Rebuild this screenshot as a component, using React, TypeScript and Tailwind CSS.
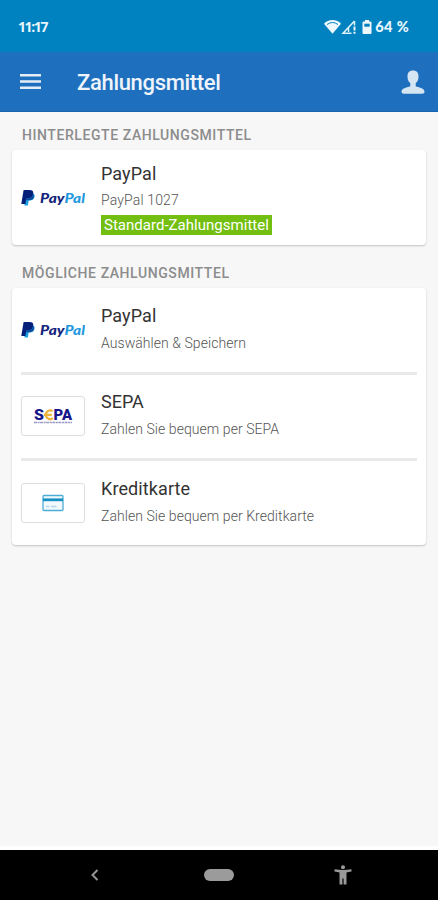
import React from "react";

function PayPalLogo() {
  return (
    <svg width="64" height="18" viewBox="0 0 64 18" aria-label="PayPal">
      <path d="M5 4.200h6.400c2.200.5 2.600 2.200 2 4.100-.7 2.300-2.400 3.200-4.600 3.200H7.700L6.800 16.500H3.400z" fill="#1a9ce0" />
      <path d="M2.600 1h6c2.900 0 4.200 1.500 3.600 4-.6 2.900-2.500 4.300-5 4.300H5.300L4.400 15H.3z" fill="#06207a" />
      <path d="M5.300 9.300h1.900c2.500 0 4.400-1.200 5-4 .7.8.9 1.800.6 3-.7 2.200-2.300 3-4.500 3H4.900z" fill="#0c4a9e" />
      <text x="19" y="14.300" textLength="45" lengthAdjust="spacingAndGlyphs" fontFamily="Lato, sans-serif" fontSize="12.500" fontStyle="italic" fontWeight="900">
        <tspan fill="#12247c">Pay</tspan>
        <tspan fill="#2499e0">Pal</tspan>
      </text>
    </svg>
  );
}

function SepaLogo() {
  return (
    <svg width="40" height="18" viewBox="0 0 40 18" aria-label="SEPA">
      <g fontFamily="Roboto, sans-serif" fontWeight="900" fontSize="14.500" fill="#16168a">
        <text x="1" y="13" textLength="10" lengthAdjust="spacingAndGlyphs">S</text>
        <text x="20.500" y="13" textLength="18.500" lengthAdjust="spacingAndGlyphs">PA</text>
      </g>
      <path d="M19.600 4.200a4.300 4.300 0 1 0 .3 6.900M10.800 7.900h8" fill="none" stroke="#edb43d" strokeWidth="2.200" />
      <path d="M1 15.500h38" stroke="#9a9ac8" strokeWidth="1.400" strokeDasharray="3 .6 2 .5" />
    </svg>
  );
}

function CardIcon() {
  return (
    <svg width="22" height="18" viewBox="0 0 22 18">
      <rect x="1" y="1.500" width="20" height="15" rx="1" fill="#f3fafd" stroke="#4dadd6" strokeWidth="1.300" />
      <path d="M1 5.800h20" stroke="#168fc2" strokeWidth="2.800" />
      <path d="M4 12.500h3.500M9 12.500h5.500" stroke="#b4d5ec" strokeWidth="1.600" />
    </svg>
  );
}

function Frame({ children }: { children: React.ReactNode }) {
  return (
    <div className="flex h-10 w-16 items-center justify-center rounded-[3px] border border-[#dedede] bg-white">
      {children}
    </div>
  );
}

interface MethodProps {
  logo: React.ReactNode;
  title: string;
  titleClass: string;
  text: string;
}

function Method({ logo, title, titleClass, text }: MethodProps) {
  return (
    <div className="flex h-[83.5px] items-center">
      <div className="w-20 shrink-0">{logo}</div>
      <div className="flex flex-col gap-[5px] pb-px whitespace-nowrap">
        <div className={"text-[18px] leading-[23px] text-[#333] " + titleClass}>{title}</div>
        <div className="text-[14px] leading-[23px] font-light tracking-[0.06px] text-[#555]">{text}</div>
      </div>
    </div>
  );
}

export default function App() {
  return (
    <div className="flex h-[900px] w-[438px] flex-col overflow-hidden bg-[#f7f7f7] font-['Roboto',sans-serif]">
      <div className="flex h-[52px] shrink-0 items-center bg-[#0082c0] pt-[1px] pr-[29px] pl-[18px] text-[#e8f6fc]">
        <span className="font-['Open_Sans',sans-serif] text-[14px] font-bold tracking-[-1.4px]">11:17</span>
        <span className="grow" />
        <svg width="54" height="18" viewBox="0 0 54 18" fill="#edf8fd">
          <path d="M0 5.800C4 .8 13 .8 17 5.800L8.500 15.800z" />
          <path d="M3 6.500q5.500-4 11 0" fill="none" stroke="#0082c0" strokeWidth="1" />
          <path d="M30.500 3L19 15.200h8.500M30.500 3v4.500M24.500 14V9.500" fill="none" stroke="#e0f2fa" strokeWidth="1.500" />
          <path d="M29.500 8.500h2v4h-2zM29.500 13.800h2v2h-2z" />
          <path d="M41 2h4v1.500h1.500q1 0 1 1v10.500q0 1-1 1h-7q-1 0-1-1V4.500q0-1 1-1H41z" />
          <path d="M40.300 5.700h5.400v3h-5.400z" fill="#0082c0" />
        </svg>
        <span className="ml-[-3px] font-['Lato',sans-serif] text-[14.5px] font-black tracking-[0.35px]">64 %</span>
      </div>

      <header className="flex h-[59.5px] shrink-0 items-center border-b border-[#1763ad] bg-[#1e70bf] pr-[13px] pl-5">
        <svg width="21" height="18" viewBox="0 0 21 18" stroke="#e4edf6" strokeWidth="2.500">
          <path d="M0 3.200h21M0 9.500h21M0 15.700h21" />
        </svg>
        <h1 className="ml-9 pt-[4px] text-[22px] leading-7 font-medium tracking-[-0.32px] text-[#eef4fa]">Zahlungsmittel</h1>
        <svg className="mt-[2px] ml-auto" width="24" height="26" viewBox="0 0 24 26" fill="#d5e5f2">
          <path d="M6.500 7.500C6.500 3.500 8.500 1.500 12 1.500s5.500 2 5.500 6c0 3-1 5.500-2.800 6.800v3c2.800 1.300 8.300 1.700 8.800 5.200.2 1.700-1 2.200-2.500 2.200H3C1.500 24.700.300 24.200.5 22.500c.5-3.500 6-3.900 8.800-5.200v-3C7.500 13 6.500 10.500 6.500 7.500z" />
        </svg>
      </header>

      <main className="grow px-3">
        <h2 className="flex h-[38.5px] items-end pb-[4px] pl-[10px] text-[14px] leading-[22px] font-medium tracking-[0.58px] text-[#8c8c8c]">
          HINTERLEGTE ZAHLUNGSMITTEL
        </h2>
        <section className="flex h-[94.5px] items-center rounded-[4px] bg-white pl-[9px] shadow-[0_1px_2px_rgba(0,0,0,0.22)]">
          <div className="w-20 shrink-0 pt-[2px]"><PayPalLogo /></div>
          <div className="flex flex-col items-start pt-[1px]">
            <div className="text-[18px] leading-[26px] tracking-[0.1px] text-[#333]">PayPal</div>
            <div className="mt-[2px] text-[14px] leading-[22px] font-light tracking-[0.15px] text-[#555]">PayPal 1027</div>
            <div className="mt-[4px] h-5 bg-[#72bf12] px-[3px] text-[15px] leading-5 tracking-[0.02px] whitespace-nowrap text-white">Standard-Zahlungsmittel</div>
          </div>
        </section>

        <h2 className="flex h-[43.5px] items-end pb-[4px] pl-[10px] text-[14px] leading-[22px] font-medium tracking-[0.58px] text-[#8c8c8c]">
          MÖGLICHE ZAHLUNGSMITTEL
        </h2>
        <section className="flex h-[257px] flex-col rounded-[4px] bg-white px-[9px] shadow-[0_1px_2px_rgba(0,0,0,0.22)]">
          <Method logo={<PayPalLogo />} title="PayPal" titleClass="tracking-[0.1px]" text="Auswählen & Speichern" />
          <div className="h-[3px] shrink-0 bg-[#e9e9e9]" />
          <Method logo={<Frame><SepaLogo /></Frame>} title="SEPA" titleClass="" text="Zahlen Sie bequem per SEPA" />
          <div className="h-[3px] shrink-0 bg-[#e9e9e9]" />
          <Method logo={<Frame><CardIcon /></Frame>} title="Kreditkarte" titleClass="tracking-[0.1px]" text="Zahlen Sie bequem per Kreditkarte" />
        </section>
      </main>

      <div className="h-1 shrink-0 bg-white" />
      <nav className="flex h-[50px] shrink-0 items-center bg-black pl-[90px]">
        <svg width="9" height="14" viewBox="0 0 9 14" fill="none" stroke="#959595" strokeWidth="2">
          <path d="M7.500 2L2.500 7l5 5" />
        </svg>
        <div className="ml-[105px] h-3 w-[30px] rounded-full bg-[#9b9b9b]" />
        <svg className="ml-[100px]" width="18" height="20" viewBox="0 0 18 20" fill="#9a9a9a">
          <circle cx="9" cy="2.300" r="2" />
          <path d="M.5 4.300q8.500 1.500 17 0v2.200q-3 .7-5 .9V19.500H9.600v-6H8.400v6H5.500V7.400Q3.500 7.200.5 6.500z" />
        </svg>
      </nav>
    </div>
  );
}
